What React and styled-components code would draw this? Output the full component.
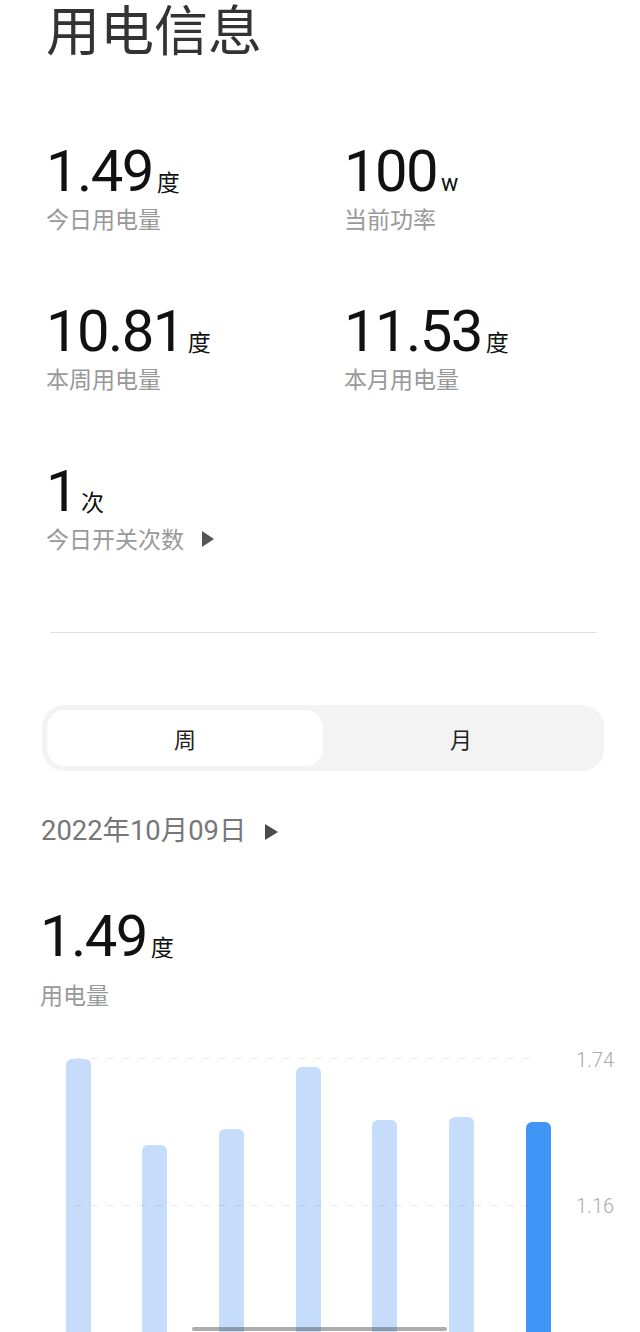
import React from "react";
import styled, { createGlobalStyle } from "styled-components";

const Global = createGlobalStyle`
  html, body { margin: 0; padding: 0; background: #fff; overflow: hidden; }
  body { font-family: Roboto, "Noto Sans CJK SC", sans-serif; -webkit-font-smoothing: antialiased; }
`;

const Page = styled.div`
  width: 640px;
  height: 1332px;
  position: relative;
  overflow: hidden;
  background: #fff;
`;

const Title = styled.h1`
  margin: 1px 0 0 46px;
  font-family: "Noto Sans CJK SC", sans-serif;
  font-weight: 400;
  font-size: 54px;
  line-height: 54px;
  color: #333;
`;

const StatsGrid = styled.div`
  display: grid;
  grid-template-columns: 298px 1fr;
  row-gap: 72px;
  margin: 87px 0 0 46px;
`;

const Stat = styled.div`
  display: flex;
  flex-direction: column;
`;

const ValueRow = styled.div`
  display: flex;
  align-items: baseline;
  height: ${(p) => p.$size}px;
`;

const Number = styled.span`
  font-family: Roboto, sans-serif;
  font-size: ${(p) => p.$size}px;
  line-height: ${(p) => p.$size}px;
  letter-spacing: -1.6px;
  color: #111;
`;

const Unit = styled.span`
  font-family: Roboto, "Noto Sans CJK SC", sans-serif;
  font-size: 23px;
  line-height: 23px;
  color: #111;
  margin-left: 4px;
`;

const Label = styled.div`
  display: flex;
  align-items: center;
  gap: 18px;
  margin-top: ${(p) => p.$gap}px;
  font-family: "Noto Sans CJK SC", sans-serif;
  font-size: 23px;
  line-height: 23px;
  color: #999;
`;

const Divider = styled.hr`
  border: none;
  height: 1px;
  background: #e0e0e0;
  margin: 82px 43px 0 50px;
`;

const Segment = styled.div`
  display: grid;
  grid-template-columns: 1fr 1fr;
  margin: 72px 36px 0 42px;
  height: 66px;
  padding: 5px;
  box-sizing: border-box;
  background: #f3f3f3;
  border-radius: 22px;
`;

const SegmentItem = styled.div`
  display: flex;
  align-items: center;
  justify-content: center;
  border-radius: 18px;
  background: ${(p) => (p.$active ? "#fff" : "transparent")};
  font-family: "Noto Sans CJK SC", sans-serif;
  font-size: 22px;
  color: #222;
`;

const Section = styled.div`
  padding-left: 40px;
`;

const DateRow = styled.div`
  display: flex;
  align-items: center;
  gap: 19px;
  margin: 47px 0 0 1px;
  font-family: Roboto, "Noto Sans CJK SC", sans-serif;
  font-size: 27.4px;
  line-height: 1;
  color: #777;
`;

const TotalBlock = styled.div`
  margin-top: 62px;
`;

const Chart = styled.svg`
  display: block;
  margin-top: 34px;
`;

const HomeIndicator = styled.div`
  position: absolute;
  left: 192px;
  bottom: 1px;
  width: 255px;
  height: 4px;
  border-radius: 2px;
  background: rgba(70, 70, 70, 0.45);
`;

const Arrow = ({ color = "#555", w = 12, h = 16 }) => (
  <svg width={w} height={h} viewBox={`0 0 ${w} ${h}`}>
    <polygon points={`0,0 ${w},${h / 2} 0,${h}`} fill={color} />
  </svg>
);

const stats = [
  { value: "1.49", unit: "度", label: "今日用电量" },
  { value: "100", unit: "w", label: "当前功率" },
  { value: "10.81", unit: "度", label: "本周用电量" },
  { value: "11.53", unit: "度", label: "本月用电量" },
  { value: "1", unit: "次", label: "今日开关次数", arrow: true },
];

const bars = [
  { x: 66, top: 19 },
  { x: 142, top: 105 },
  { x: 219, top: 89 },
  { x: 296, top: 27 },
  { x: 372, top: 80 },
  { x: 449, top: 77 },
  { x: 526, top: 82, active: true },
];

export default function App() {
  return (
    <Page>
      <Global />
      <Title>用电信息</Title>
      <StatsGrid>
        {stats.map((s) => (
          <Stat key={s.label}>
            <ValueRow $size={58}>
              <Number $size={58}>{s.value}</Number>
              <Unit>{s.unit}</Unit>
            </ValueRow>
            <Label $gap={7}>
              {s.label}
              {s.arrow && <Arrow />}
            </Label>
          </Stat>
        ))}
      </StatsGrid>
      <Divider />
      <Segment>
        <SegmentItem $active>周</SegmentItem>
        <SegmentItem>月</SegmentItem>
      </Segment>
      <Section>
        <DateRow>
          2022年10月09日
          <Arrow color="#4a4a4a" w={13} h={16} />
        </DateRow>
        <TotalBlock>
          <ValueRow $size={58}>
            <Number $size={58}>1.49</Number>
            <Unit>度</Unit>
          </ValueRow>
          <Label $gap={18}>用电量</Label>
        </TotalBlock>
      </Section>
      <Chart width="640" height="292" viewBox="0 0 640 292">
        {bars.map((b, i) => (
          <rect
            key={i}
            x={b.x}
            y={b.top}
            width="25"
            height={320 - b.top}
            rx="6"
            fill={b.active ? "#4195f7" : "#c5dcfa"}
          />
        ))}
        <line x1="75" y1="18.5" x2="532" y2="18.5" stroke="rgba(0,0,0,0.09)" strokeWidth="1" strokeDasharray="7 9" />
        <line x1="75" y1="165.5" x2="532" y2="165.5" stroke="rgba(0,0,0,0.09)" strokeWidth="1" strokeDasharray="7 9" />
        <text x="576" y="27" fontFamily="Roboto, sans-serif" fontWeight="300" fontSize="20" fill="#aaa">1.74</text>
        <text x="576" y="173" fontFamily="Roboto, sans-serif" fontWeight="300" fontSize="20" fill="#aaa">1.16</text>
      </Chart>
      <HomeIndicator />
    </Page>
  );
}
